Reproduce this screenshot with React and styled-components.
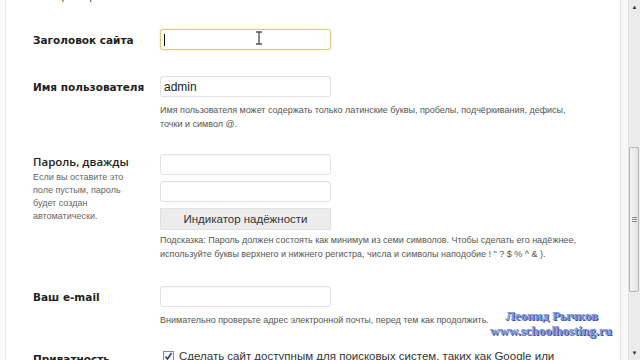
import React from 'react';
import styled, { createGlobalStyle } from 'styled-components';

const Global = createGlobalStyle`
  html, body { margin: 0; padding: 0; background: #fff; }
  body { font-family: "Liberation Sans", Arial, sans-serif; }
  * { box-sizing: border-box; }
`;

const Window = styled.div`
  display: flex;
  width: 640px;
  height: 360px;
  overflow: hidden;
  position: relative;
`;

const Page = styled.div`
  flex: 1;
  display: flex;
  padding-left: 5px;
  background: #fafafa;
`;

const Sheet = styled.div`
  flex: 1;
  background: #fff;
  border-left: 1px solid #ececec;
  border-right: 1px solid #e2e2e2;
  overflow: hidden;
`;

const Gutter = styled.div`
  width: 7px;
  background: #f8f8f8;
`;

const Scrollbar = styled.div`
  width: 12px;
  background: #ebebeb;
  border-left: 1px solid #e0e0e0;
  display: flex;
  flex-direction: column;
  align-items: center;
`;

const Arrow = styled.div`
  height: 14px;
  width: 100%;
  display: flex;
  align-items: center;
  justify-content: center;
  color: #333;
  font-size: 6px;
`;

const Track = styled.div`
  flex: 1;
  width: 100%;
  display: flex;
  flex-direction: column;
  padding-top: 133px;
  padding-bottom: 54px;
`;

const Thumb = styled.div`
  flex: 1;
  margin: 0 1px 0 0;
  background: linear-gradient(to right, #f4f4f4, #e2e2e2);
  border: 1px solid #b5b5b5;
  border-radius: 2px;
  display: flex;
  align-items: center;
  justify-content: center;
`;

const Grip = styled.div`
  width: 5px;
  height: 5px;
  background: repeating-linear-gradient(to bottom, #8a8a8a 0, #8a8a8a 1px, transparent 1px, transparent 2px);
`;

const Form = styled.div`
  margin-top: -10px;
  padding-left: 27px;
`;

const Intro = styled.p`
  margin: 0 0 20px;
  font-size: 10px;
  color: #333;
  line-height: 13px;
`;

const Row = styled.div`
  display: grid;
  grid-template-columns: 127px 1fr;
  padding: ${p => p.$pad || '12px 0'};
`;

const Label = styled.div`
  font-family: "DejaVu Sans", Verdana, sans-serif;
  font-weight: bold;
  font-size: 10.5px;
  color: #222;
  padding-top: ${p => p.$top || '5px'};
`;

const LabelAlt = styled.div`
  font-family: "Open Sans", "Liberation Sans", sans-serif;
  font-weight: 600;
  font-size: 11.5px;
  color: #222;
  line-height: 15px;
`;

const SideNote = styled.div`
  font-size: 9px;
  color: #666;
  line-height: 13px;
  margin-top: 2px;
`;

const Field = styled.div`
  display: flex;
  flex-direction: column;
  gap: 6px;
`;

const InputBox = styled.div`
  position: relative;
  width: 171px;
  height: 21px;
  border: 1px solid ${p => (p.$focus ? '#dcc98a' : '#e2e2e2')};
  box-shadow: ${p => (p.$focus ? '0 0 2px rgba(220,190,90,0.6)' : 'inset 0 1px 1px rgba(0,0,0,0.03)')};
  border-radius: 3px;
  background: #fff;
  font-size: 12px;
  color: #222;
  padding: 3px 3px;
  line-height: 14px;
`;

const Caret = styled.span`
  position: absolute;
  left: 3px;
  top: 4px;
  width: 1px;
  height: 12px;
  background: #111;
`;

const Pointer = styled.svg`
  position: absolute;
  left: 94px;
  top: 0px;
`;

const Button = styled.div`
  width: 171px;
  height: 22px;
  background: #ececec;
  border: 1px solid #e2e2e2;
  font-size: 11.5px;
  color: #333;
  display: flex;
  align-items: center;
  justify-content: center;
`;

const Note = styled.p`
  margin: ${p => p.$m || '3px 0 0'};
  font-size: 9px;
  color: #555;
  line-height: 14px;
`;

const CheckLine = styled.div`
  display: flex;
  align-items: center;
  gap: 5px;
  padding-left: 3px;
  font-size: 11.5px;
  color: #333;
`;

const Check = styled.span`
  width: 11px;
  height: 11px;
  border: 1px solid #7a8aa8;
  background: #f4f6fa;
  display: flex;
  align-items: center;
  justify-content: center;
`;

const Watermark = styled.div`
  position: absolute;
  left: 490px;
  top: 308px;
  font-family: "Liberation Serif", "Times New Roman", serif;
  font-weight: bold;
  font-size: 13px;
  line-height: 15px;
  color: #8094d8;
  text-shadow: 1px 1px 0 #3a4f9a, -0.5px -0.5px 0 #c8d2f2;
  text-align: right;
`;

const WmLine = styled.div`
  padding-right: ${p => p.$pr || '0'};
`;

export default function App() {
  return (
    <>
      <Global />
      <Window>
        <Page>
          <Sheet>
            <Form>
              <Intro>эти параметры.</Intro>
              <Row $pad="6px 0 12px">
                <Label>Заголовок сайта</Label>
                <Field>
                  <InputBox $focus>
                    <Caret />
                    <Pointer width="8" height="16" viewBox="0 0 8 16">
                      <path d="M1 2h6M4 2v12M1 14h6" stroke="#555" strokeWidth="1.4" fill="none" />
                    </Pointer>
                  </InputBox>
                </Field>
              </Row>
              <Row $pad="14px 0 12px">
                <Label>Имя пользователя</Label>
                <Field>
                  <InputBox>admin</InputBox>
                  <Note $m="0">
                    Имя пользователя может содержать только латинские буквы, пробелы, подчёркивания, дефисы,
                    <br />
                    точки и символ @.
                  </Note>
                </Field>
              </Row>
              <Row $pad="11px 0 12px">
                <div>
                  <LabelAlt>Пароль, дважды</LabelAlt>
                  <SideNote>
                    Если вы оставите это
                    <br />
                    поле пустым, пароль
                    <br />
                    будет создан
                    <br />
                    автоматически.
                  </SideNote>
                </div>
                <Field>
                  <InputBox />
                  <InputBox />
                  <Button>Индикатор надёжности</Button>
                  <Note $m="-3px 0 0">
                    Подсказка: Пароль должен состоять как минимум из семи символов. Чтобы сделать его надёжнее,
                    <br />
                    используйте буквы верхнего и нижнего регистра, числа и символы наподобие ! " ? $ % ^ &amp; ).
                  </Note>
                </Field>
              </Row>
              <Row $pad="13px 0 12px">
                <Label>Ваш e-mail</Label>
                <Field>
                  <InputBox />
                  <Note $m="0">Внимательно проверьте адрес электронной почты, перед тем как продолжить.</Note>
                </Field>
              </Row>
              <Row $pad="8px 0 0">
                <Label $top="6px">Приватность</Label>
                <CheckLine>
                  <Check>
                    <svg width="9" height="9" viewBox="0 0 9 9">
                      <path d="M1.5 4.5l2 2.5 4-6" stroke="#2a3a6a" strokeWidth="1.5" fill="none" />
                    </svg>
                  </Check>
                  Сделать сайт доступным для поисковых систем, таких как Google или
                </CheckLine>
              </Row>
            </Form>
          </Sheet>
          <Gutter />
        </Page>
        <Scrollbar>
          <Arrow>▲</Arrow>
          <Track>
            <Thumb>
              <Grip />
            </Thumb>
          </Track>
          <Arrow>▼</Arrow>
        </Scrollbar>
        <Watermark>
          <WmLine $pr="14px">Леонид Рычков</WmLine>
          <WmLine>www.schoolhosting.ru</WmLine>
        </Watermark>
      </Window>
    </>
  );
}
